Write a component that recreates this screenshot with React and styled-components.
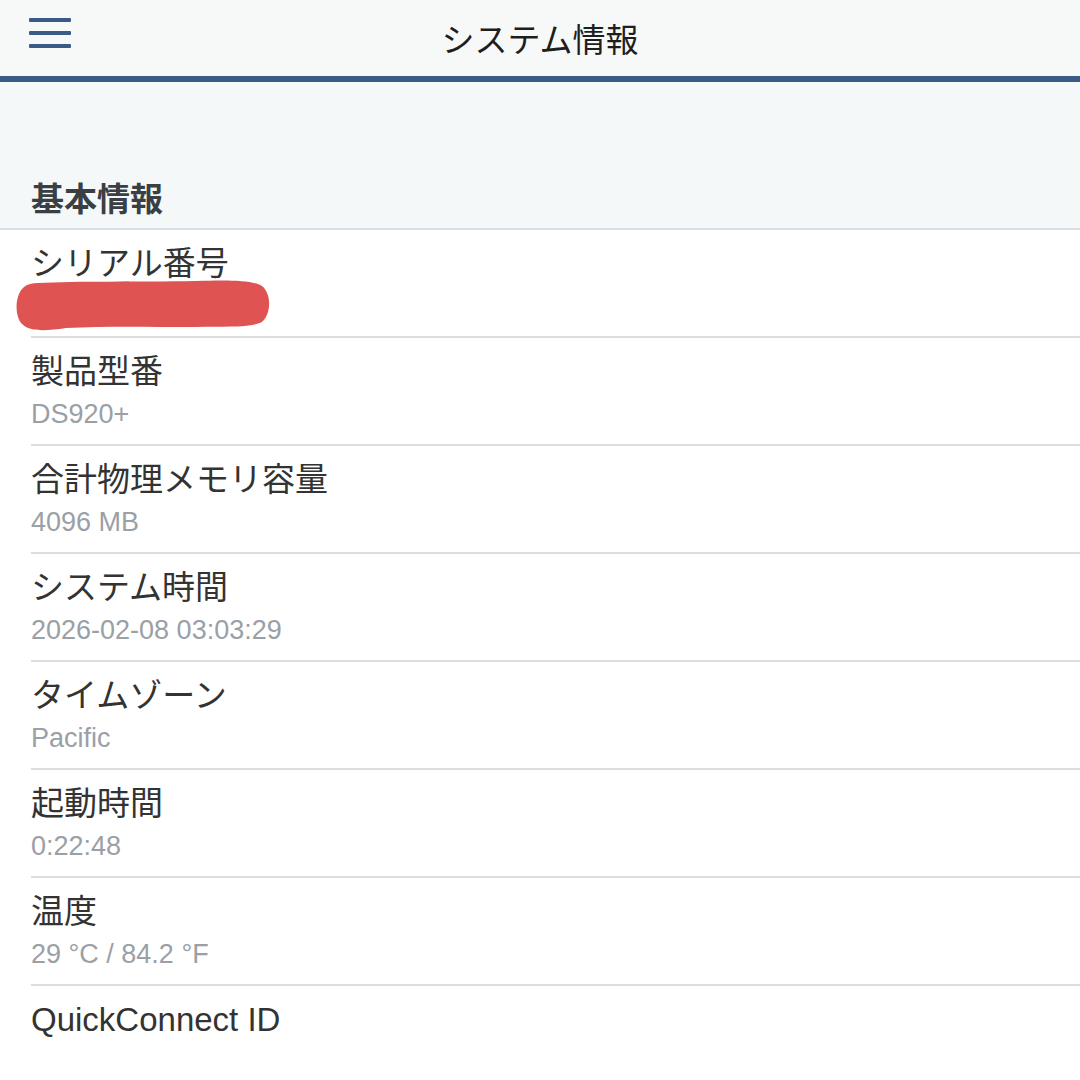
import React from "react";
import styled, { createGlobalStyle } from "styled-components";

const GlobalStyle = createGlobalStyle`
  html, body {
    margin: 0;
    padding: 0;
    background: #ffffff;
  }
  body {
    font-family: "Liberation Sans", "Noto Sans CJK JP", sans-serif;
    -webkit-font-smoothing: antialiased;
  }
`;

const Page = styled.div`
  width: 1080px;
  min-height: 1080px;
  background: #ffffff;
`;

const Header = styled.header`
  position: relative;
  height: 76px;
  display: flex;
  align-items: center;
  justify-content: center;
  background: #f7f8f8;
  border-bottom: 6px solid #3b5a85;
`;

const MenuButton = styled.button`
  position: absolute;
  left: 28px;
  top: 16px;
  width: 44px;
  height: 34px;
  border: none;
  background: transparent;
  display: flex;
  flex-direction: column;
  justify-content: space-between;
  padding: 2px 1px;
`;

const MenuLine = styled.span`
  display: block;
  height: 4px;
  border-radius: 1px;
  background: #3b5a85;
`;

const HeaderTitle = styled.h1`
  margin: 0;
  font-size: 33px;
  font-weight: 400;
  color: #1e1e1e;
`;

const SectionHead = styled.div`
  height: 148px;
  display: flex;
  align-items: flex-end;
  padding: 0 31px 8px;
  box-sizing: border-box;
  background: #f4f8f8;
  border-bottom: 2px solid #dcdde2;
`;

const SectionTitle = styled.h2`
  margin: 0;
  font-size: 33px;
  line-height: 40px;
  font-weight: 700;
  color: #3a3f44;
`;

const List = styled.ul`
  margin: 0;
  padding: 0;
  list-style: none;
`;

const Row = styled.li`
  position: relative;
  margin-left: 31px;
  height: 92px;
  padding-top: 14px;
  box-sizing: content-box;
  border-bottom: ${(p) => (p.$last ? "none" : "2px solid #dcdde2")};
`;

const Label = styled.div`
  font-size: 33px;
  line-height: 40px;
  color: #333333;
`;

const Value = styled.div`
  margin-top: 4px;
  font-size: 27px;
  line-height: 36px;
  color: #9aa0a6;
`;

const Redaction = styled.svg`
  position: absolute;
  left: -15px;
  top: 50px;
  width: 254px;
  height: 52px;
`;

const items = [
  { label: "シリアル番号", value: null },
  { label: "製品型番", value: "DS920+" },
  { label: "合計物理メモリ容量", value: "4096 MB" },
  { label: "システム時間", value: "2026-02-08 03:03:29" },
  { label: "タイムゾーン", value: "Pacific" },
  { label: "起動時間", value: "0:22:48" },
  { label: "温度", value: "29 °C / 84.2 °F" },
  { label: "QuickConnect ID", value: "", last: true },
];

const App = () => {
  return (
    <Page>
      <GlobalStyle />
      <Header>
        <MenuButton aria-label="menu">
          <MenuLine />
          <MenuLine />
          <MenuLine />
        </MenuButton>
        <HeaderTitle>システム情報</HeaderTitle>
      </Header>
      <SectionHead>
        <SectionTitle>基本情報</SectionTitle>
      </SectionHead>
      <List>
        {items.map((item) => (
          <Row key={item.label} $last={item.last}>
            <Label>{item.label}</Label>
            {item.value === null ? (
              <Redaction viewBox="0 0 254 52">
                <path
                  d="M22 3 C60 1 120 2 180 1 C212 0 236 0 246 6 C256 14 255 34 246 42 C234 48 210 46 180 47 C130 47 90 46 50 48 C30 51 14 52 6 44 C-2 36 -1 14 8 7 C12 4 16 3 22 3 Z"
                  fill="#e05353"
                />
              </Redaction>
            ) : (
              <Value>{item.value}</Value>
            )}
          </Row>
        ))}
      </List>
    </Page>
  );
};

export default App;
